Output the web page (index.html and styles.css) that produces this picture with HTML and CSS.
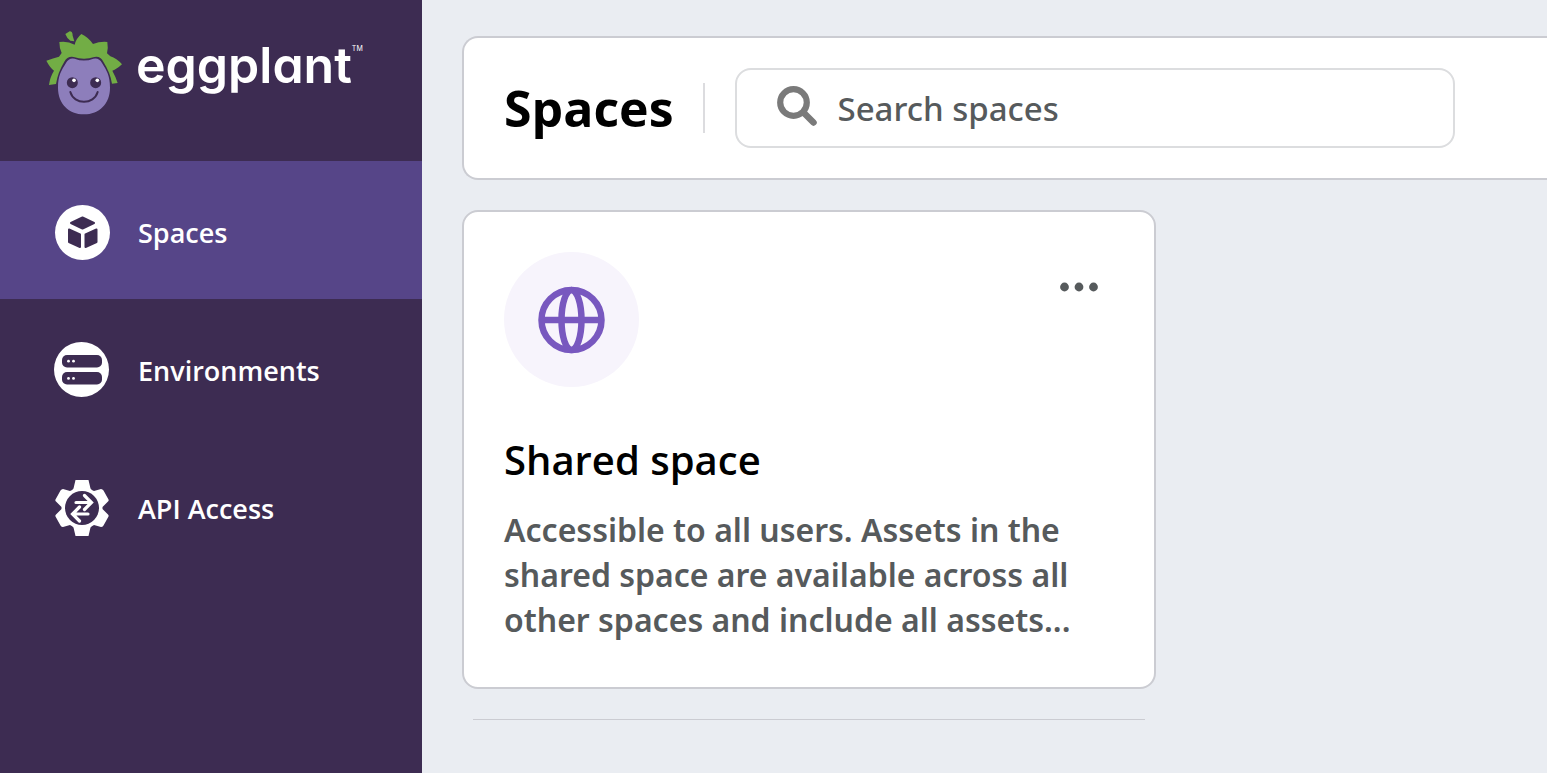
FILE: index.html
```html
<!DOCTYPE html>
<html lang="en">
<head>
  <meta charset="utf-8">
  <title>Eggplant - Spaces</title>
  <link rel="stylesheet" href="styles.css">
</head>
<body>
  <aside class="sidebar">
    <a class="logo" href="#">
      <svg class="logo-mark" viewBox="48 32 228 252" aria-hidden="true">
        <path fill="#72ad45" d="M106 41L119 33Q128 33 128 46L133 63L121 61Q111 55 106 41Z"/>
        <path fill="#72ad45" d="M88 65Q112 61 134 73Q138 55 154 41Q174 50 189 71Q210 63 232 65Q235 82 231 99L241 108Q260 114 276 132Q260 147 247 151Q257 169 263 188L246 190Q241 157 220 124Q211 106 193 110Q162 121 131 110Q112 107 103 124Q83 157 78 191L57 194Q60 170 72 151Q60 142 49 121Q70 113 87 109L95 98Q88 83 88 65Z"/>
        <path fill="#8d7ebb" d="M134 115Q162 126 190 115Q207 111 216 128C230 151 240 165 240 202C240 250 208 282 162 282C116 282 84 250 84 202C84 165 94 151 108 128Q117 111 134 115Z"/>
        <circle cx="127" cy="187" r="16.500" fill="#3d2c52"/>
        <circle cx="197" cy="187" r="16.500" fill="#3d2c52"/>
        <circle cx="132" cy="180" r="5.500" fill="#fff"/>
        <circle cx="202" cy="180" r="5.500" fill="#fff"/>
        <path fill="none" stroke="#3d2c52" stroke-width="6" stroke-linecap="round" d="M121 215C132 254 192 254 203 215"/>
      </svg>
      <span class="logo-text">eggplant</span><span class="logo-tm">TM</span>
    </a>
    <nav class="nav">
      <a class="nav-item active" href="#">
        <svg class="nav-icon" viewBox="0 0 56 56" aria-hidden="true">
          <circle cx="28.500" cy="28.500" r="27.500" fill="#fff"/>
          <g fill="#3d2c52" stroke="#3d2c52" stroke-width="2" stroke-linejoin="round">
            <path d="M28.500 13.500L40 19L28.500 24.500L17 19Z"/>
            <path d="M15 25.500L26 30.500V43L15 38Z"/>
            <path d="M42.500 25.500L31.500 30.500V43L42.500 38Z"/>
          </g>
        </svg>
        <span>Spaces</span>
      </a>
      <a class="nav-item" href="#">
        <svg class="nav-icon" viewBox="0 0 56 56" aria-hidden="true">
          <circle cx="27.500" cy="27.500" r="27.500" fill="#fff"/>
          <rect x="8" y="13" width="40" height="12.500" rx="5" fill="#3d2c52"/>
          <rect x="8" y="30" width="40" height="12.500" rx="5" fill="#3d2c52"/>
          <g fill="#fff">
            <circle cx="14.500" cy="19.200" r="1.400"/>
            <circle cx="19.500" cy="19.200" r="1.400"/>
            <circle cx="14.500" cy="36.400" r="1.400"/>
            <circle cx="19.500" cy="36.400" r="1.400"/>
          </g>
        </svg>
        <span>Environments</span>
      </a>
      <a class="nav-item" href="#">
        <svg class="nav-icon" viewBox="0 0 56 56" aria-hidden="true">
          <path fill="#fff" d="M21.500 0H34.500L36.500 8.500Q37.500 10 40 11L47 9Q48.500 9 49.500 10.500L54.500 19.500Q55 20.500 54 21.500L48.500 27V29L54 34.500Q55 35.500 54.500 36.500L49.500 45.500Q48.500 47 47 47L40 45Q37.500 46 36.500 47.500L34.500 56H21.500L19.500 47.500Q18.500 46 16 45L9 47Q7.500 47 6.500 45.500L1.500 36.500Q1 35.500 2 34.500L7.500 29V27L2 21.500Q1 20.500 1.500 19.500L6.500 10.500Q7.500 9 9 9L16 11Q18.500 10 19.500 8.500Z"/>
          <circle cx="28" cy="28" r="17" fill="#3d2c52"/>
          <g fill="none" stroke="#fff" stroke-width="3.200" stroke-linejoin="miter">
            <path stroke-linecap="round" d="M22 22.500H37M30.500 15.500L37.500 22.500L30.500 29.500"/>
            <path stroke-linecap="round" d="M34 34H19M25.500 41L18.500 34L25.500 27"/>
          </g>
        </svg>
        <span>API Access</span>
      </a>
    </nav>
  </aside>

  <main class="main">
    <header class="toolbar">
      <h1>Spaces</h1>
      <div class="divider"></div>
      <label class="search">
        <svg class="search-icon" viewBox="0 0 40 40" aria-hidden="true">
          <circle cx="16.500" cy="16.500" r="13.300" fill="none" stroke="#7a7a7a" stroke-width="6.200"/>
          <path d="M27 27L36.500 36.500" stroke="#7a7a7a" stroke-width="6.500" stroke-linecap="round"/>
        </svg>
        <input type="text" placeholder="Search spaces" aria-label="Search spaces">
      </label>
    </header>

    <section class="card">
      <div class="card-top">
        <div class="card-icon">
          <svg viewBox="0 0 68 68" aria-hidden="true">
            <g fill="none" stroke="#7858bf" stroke-width="6.500">
              <circle cx="33.500" cy="34" r="30"/>
              <ellipse cx="33.500" cy="34" rx="10" ry="30"/>
              <path d="M4 34H63"/>
            </g>
          </svg>
        </div>
        <button class="menu-btn" type="button" aria-label="More options">
          <svg viewBox="0 0 38 10" aria-hidden="true">
            <g fill="#565a5c">
              <circle cx="4.500" cy="5" r="4.400"/>
              <circle cx="19" cy="5" r="4.400"/>
              <circle cx="33.500" cy="5" r="4.400"/>
            </g>
          </svg>
        </button>
      </div>
      <h2>Shared space</h2>
      <p>Accessible to all users. Assets in the shared space are available across all other spaces and include all assets...</p>
    </section>
    <hr class="line">
  </main>
</body>
</html>
```
FILE: styles.css
```css
* {
  box-sizing: border-box;
}
body {
  margin: 0;
  min-height: 100vh;
  display: flex;
  font-family: "Open Sans", "Noto Sans", sans-serif;
  background: #eaedf2;
  color: #000;
}
h1, h2, p {
  margin: 0;
}

/* sidebar */
.sidebar {
  flex: 0 0 422px;
  background: #3d2c52;
}
.logo {
  display: flex;
  align-items: flex-start;
  height: 161px;
  padding: 31px 0 0 46px;
  color: #fff;
  text-decoration: none;
}
.logo-mark {
  width: 76px;
  height: 84px;
  margin-right: 14px;
}
.logo-text {
  font-family: Inter, "Open Sans", sans-serif;
  font-size: 50px;
  font-weight: 600;
  line-height: 68px;
  font-feature-settings: "cv11";
}
.logo-tm {
  padding-top: 14px;
  font-family: Inter, sans-serif;
  font-size: 7px;
  line-height: 8px;
}
.nav-item {
  display: flex;
  align-items: center;
  gap: 28px;
  height: 138px;
  padding: 4px 0 0 54px;
  color: #fff;
  font-size: 27px;
  font-weight: 600;
  text-decoration: none;
}
.nav-item.active {
  background: #564588;
}
.nav-icon {
  width: 56px;
  height: 56px;
}

/* content */
.main {
  flex: 1;
  min-width: 0;
  padding: 36px 0 40px 40px;
}
.toolbar {
  display: flex;
  align-items: center;
  gap: 30px;
  padding: 30px 40px;
  background: #fff;
  border: 2px solid #cbccd2;
  border-right: none;
  border-radius: 16px 0 0 16px;
}
h1 {
  font-size: 50px;
  font-weight: 700;
  line-height: 68px;
}
.divider {
  width: 2px;
  height: 50px;
  background: #dcdcdf;
}
.search {
  flex: 0 1 720px;
  display: flex;
  align-items: center;
  gap: 20px;
  height: 80px;
  padding: 0 40px;
  border: 2px solid #dcdddf;
  border-radius: 16px;
}
.search-icon {
  flex: none;
  width: 40px;
  height: 40px;
  margin-bottom: 4px;
}
.search input {
  flex: 1;
  min-width: 0;
  padding: 0;
  border: none;
  outline: none;
  background: none;
  font: 500 33px "Noto Sans", "Open Sans", sans-serif;
  color: #565a5c;
}
.search input::placeholder {
  color: #565a5c;
  opacity: 1;
}
.card {
  max-width: 694px;
  margin-top: 30px;
  padding: 40px 40px 45px;
  background: #fff;
  border: 2px solid #cbccd2;
  border-radius: 16px;
}
.card-top {
  display: flex;
  justify-content: space-between;
  align-items: flex-start;
  margin-bottom: 45px;
}
.card-icon {
  display: flex;
  align-items: center;
  justify-content: center;
  width: 135px;
  height: 135px;
  border-radius: 50%;
  background: #f7f4fc;
}
.card-icon svg {
  width: 68px;
  height: 68px;
}
.menu-btn {
  display: flex;
  margin: 20px 6px 0 0;
  padding: 10px;
  border: none;
  background: none;
  cursor: pointer;
}
.menu-btn svg {
  width: 38px;
  height: 10px;
}
h2 {
  margin-bottom: 19px;
  font-size: 40px;
  font-weight: 600;
  line-height: 56px;
}
.card p {
  font-family: "Noto Sans", "Open Sans", sans-serif;
  font-size: 32px;
  font-weight: 600;
  line-height: 45px;
  color: #565a5c;
}
.line {
  max-width: 672px;
  height: 1px;
  margin: 30px 0 0 11px;
  border: none;
  background: #cbccd2;
}
```
